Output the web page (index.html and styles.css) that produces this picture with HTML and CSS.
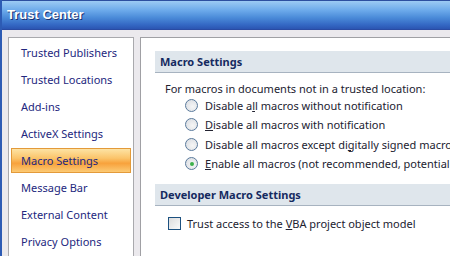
FILE: index.html
```html
<!DOCTYPE html>
<html lang="en">
<head>
  <meta charset="UTF-8">
  <title>Trust Center</title>
  <link rel="stylesheet" href="styles.css">
</head>
<body>
  <div class="window">
    <div class="titlebar">Trust Center</div>
    <div class="frame">
      <ul class="nav">
        <li>Trusted Publishers</li>
        <li>Trusted Locations</li>
        <li>Add-ins</li>
        <li>ActiveX Settings</li>
        <li class="active">Macro Settings</li>
        <li>Message Bar</li>
        <li>External Content</li>
        <li>Privacy Options</li>
      </ul>
      <div class="content">
        <h2 class="section">Macro Settings</h2>
        <p class="lead">For macros in documents not in a trusted location:</p>
        <div class="options">
          <label class="option"><span class="radio"></span><span>Disable a<u>l</u>l macros without notification</span></label>
          <label class="option"><span class="radio"></span><span><u>D</u>isable all macros with notification</span></label>
          <label class="option"><span class="radio"></span><span>Disable all macros except di<u>g</u>itally signed macros</span></label>
          <label class="option"><span class="radio checked"></span><span><u>E</u>nable all macros (not recommended, potentially dangerous code can be run)</span></label>
        </div>
        <h2 class="section">Developer Macro Settings</h2>
        <label class="check-row"><span class="checkbox"></span><span>Trust access to the <u>V</u>BA project object model</span></label>
      </div>
    </div>
  </div>
</body>
</html>
```

FILE: styles.css
```css
/* Window */
html {
  font-family: "Noto Sans", sans-serif;
}
body {
  margin: 0;
  width: 450px;
  height: 256px;
  overflow: hidden;
}
.window {
  height: 256px;
  border-left: 2px solid #2d5bb4;
  background: #ebe9ed;
  overflow: hidden;
}
.titlebar {
  height: 30px;
  box-sizing: border-box;
  border-top: 1px solid #2c4fa0;
  border-bottom: 1px solid #2a4ba3;
  padding: 0 0 0 5px;
  line-height: 28px;
  background: linear-gradient(#9ccbf4, #6aa8ea 35%, #4a8ad8 60%, #3468c4 85%, #2b55b2);
  color: #fff;
  font-family: "Liberation Sans", Arial, sans-serif;
  font-weight: bold;
  font-size: 13px;
  text-shadow: 1px 1px 0 #1a3070;
}

/* Body frame */
.frame {
  display: flex;
  gap: 6px;
  padding: 7px 0 0 6px;
  white-space: nowrap;
}
.nav {
  flex: 0 0 126px;
  height: 240px;
  margin: 0;
  padding: 2px 2px 0;
  list-style: none;
  box-sizing: border-box;
  background: #fff;
  border: 1px solid #a9a9ad;
  font-size: 11px;
  color: #23277e;
}
.nav li {
  height: 23px;
  line-height: 23px;
  margin-bottom: 2px;
  padding-left: 9px;
  border: 1px solid transparent;
}
.nav li.active {
  background: linear-gradient(#fde3a4, #fbc46a 40%, #f8a23c 62%, #fcca74);
  border-color: #e39a3a;
}
.content {
  flex: 1;
  height: 240px;
  padding: 13px 0 0 14px;
  background: #fff;
  border-left: 1px solid #a0a0a4;
  border-top: 1px solid #a0a0a4;
  font-size: 11px;
  color: #222230;
  overflow: hidden;
}
.section {
  height: 22px;
  line-height: 21px;
  margin: 0;
  padding-left: 5px;
  box-sizing: border-box;
  background: #dfe6ec;
  border-bottom: 1px solid #a7b3c0;
  color: #152a60;
  font-size: 11px;
  font-weight: bold;
}
.lead {
  margin: 8px 0 0 10px;
  line-height: 16px;
}
.options {
  display: flex;
  flex-direction: column;
  gap: 3.6px;
  padding: 0 0 12px 30px;
}
.option,
.check-row {
  display: flex;
  align-items: center;
  gap: 7px;
  height: 16px;
}
.radio {
  flex: 0 0 auto;
  width: 11px;
  height: 11px;
  border: 1px solid #5a7a9c;
  border-radius: 50%;
  background: radial-gradient(circle at 60% 60%, #f6f6f6, #d6dae0);
  display: flex;
  align-items: center;
  justify-content: center;
}
.radio.checked::after {
  content: "";
  width: 4px;
  height: 4px;
  border-radius: 50%;
  background: #3cb04a;
}
.check-row {
  margin: 10px 0 0 13px;
  gap: 6px;
}
.checkbox {
  flex: 0 0 auto;
  width: 11px;
  height: 11px;
  border: 1px solid #1c5180;
  background: linear-gradient(135deg, #dcdcdc, #fafafa);
}
```
